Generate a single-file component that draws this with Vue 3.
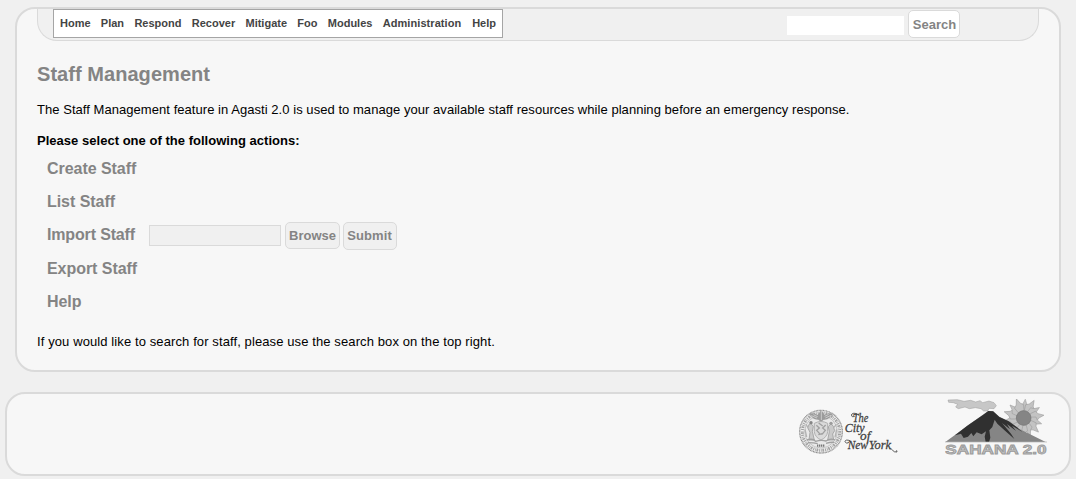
<script setup>
const menu = ['Home', 'Plan', 'Respond', 'Recover', 'Mitigate', 'Foo', 'Modules', 'Administration', 'Help']
const petals = Array.from({ length: 14 }, (_, i) => i * (360 / 14) + 4)
</script>

<template>
  <div class="page">
    <main class="panel">
      <header class="bar">
        <nav class="menu">
          <a v-for="item in menu" :key="item">{{ item }}</a>
        </nav>
        <form class="search" @submit.prevent>
          <input class="query" type="text" aria-label="Search" />
          <button class="btn find">Search</button>
        </form>
      </header>
      <section class="content">
        <h1>Staff Management</h1>
        <p class="intro">The Staff Management feature in Agasti 2.0 is used to manage your available staff resources while planning before an emergency response.</p>
        <p class="prompt">Please select one of the following actions:</p>
        <ul class="actions">
          <li><a>Create Staff</a></li>
          <li><a>List Staff</a></li>
          <li class="import">
            <a>Import Staff</a>
            <input class="file" type="text" aria-label="Import file" />
            <button class="btn browse">Browse</button>
            <button class="btn submit">Submit</button>
          </li>
          <li><a>Export Staff</a></li>
          <li><a>Help</a></li>
        </ul>
        <p class="hint">If you would like to search for staff, please use the search box on the top right.</p>
      </section>
    </main>

    <footer class="footer">
      <svg class="nyc" viewBox="54 69 300 144" aria-label="The City of New York">
        <circle cx="123" cy="140" r="64" fill="#eee" stroke="#8c8c8c" stroke-width="4" stroke-dasharray="3 1.5" />
        <circle cx="123" cy="140" r="56" fill="none" stroke="#a2a2a2" stroke-width="9" stroke-dasharray="3 3 5 2 2 3" />
        <circle cx="123" cy="140" r="49" fill="#e9e9e9" stroke="#b0b0b0" stroke-width="2" />
        <path d="M87 87q13-6 25 3l5-5 6-9 7 8 4 6q12-9 25-3-7 3-10 11-8 7-18 6l-8 7-8-7q-14 0-19-8-2-6-9-9z" fill="#9b9b9b" />
        <path d="M94 92l17 7m-11-10l13 6m40-4l-17 8m10-11l-12 6M124 78v27" fill="none" stroke="#e2e2e2" stroke-width="2" />
        <path d="M103 115q20-11 40 0v25q-2 17-20 25-18-8-20-25z" fill="#dadada" stroke="#b0b0b0" stroke-width="3" />
        <path d="M109 121l9 8-8 7 9 10m18-26l-9 9 8 7-10 12m-10-34l12 9m-13 26l15-4" stroke="#a0a0a0" stroke-width="4" fill="none" />
        <g fill="#cacaca" stroke="#9d9d9d" stroke-width="2.5">
          <path d="M93 116l7 8-3 15 6 26H87l3-23-7-14 5-11z" />
          <path d="M153 116l7 8 4 13-6 10 3 18h-18l5-25-3-15z" />
        </g>
        <circle cx="93" cy="113" r="5" fill="#858585" />
        <circle cx="153" cy="115" r="5" fill="#9c9c9c" />
        <path d="M80 165q19-6 27 4 16-5 31-1 13-9 28-3m-82 8q19 0 29 3m25-1q14-4 24-3" fill="none" stroke="#a0a0a0" stroke-width="4" />
        <path d="M75 133l5 23m90-23l-5 24M78 118l6 10m85-10l-7 9" stroke="#b3b3b3" stroke-width="4" />
        <path d="M111 182h24" stroke="#777" stroke-width="7" stroke-dasharray="4 2" />
        <g class="script">
          <text x="218" y="112" textLength="47" lengthAdjust="spacingAndGlyphs">The</text>
          <text x="194" y="141" textLength="60" lengthAdjust="spacingAndGlyphs">City</text>
          <text x="240" y="165" textLength="31" lengthAdjust="spacingAndGlyphs">of</text>
          <text x="203" y="193" textLength="61" lengthAdjust="spacingAndGlyphs">New</text>
          <text x="266" y="193" textLength="67" lengthAdjust="spacingAndGlyphs">York</text>
        </g>
        <g fill="none" stroke="#505050" stroke-width="2.8" stroke-linecap="round">
          <path d="M230 86q-13-4-16 4 1 8 9 5M210 167q-14-5-15 3 3 8 11 3" />
          <path d="M329 191q6 0 9 5 4 6 13 5l-1-4" />
        </g>
      </svg>

      <svg class="sahana" viewBox="45 42 309 171" aria-label="Sahana 2.0">
        <g transform="translate(281 99)">
          <g fill="#c3c3c3" stroke="#999" stroke-width="1.6" stroke-linejoin="round">
            <path v-for="(angle, i) in petals" :key="angle" d="M-9-20L-14-36-6-43 1-59 7-43 14-36 9-20z" :transform="`rotate(${angle}) scale(${i % 2 ? 1.04 : 0.96})`" />
          </g>
          <circle r="22" fill="#858585" stroke="#747474" stroke-width="2" />
        </g>
        <path d="M54 45l28-1 20 5 20-3 15 5 13-4 8 6 19-5 15 5 7 9-7 9-15-1-4 8h-12l-8-7-17-3-18 3-13-5-20 5-8-5 6-8-13-5-14-1z" fill="#c7c7c7" stroke="#9b9b9b" stroke-width="1.5" />
        <path d="M46 171l37-27 35-26 43-30 14-10 15 1 18 16 28 14 31 22 80 40z" fill="#858585" />
        <path d="M75 151l36-28 49-34 15-11 14 1 19 17 28 13 24 17 17 15-31-19 12 16-27-21 9 16-24-19 27 32 10 16-27-24-24-22-8-12-7 22-9 10 3 22-4 13h-10l-3-16 4-16-13 9-15-6-10 12-6-10-10 11-13 4-8-13z" fill="#303030" />
        <path d="M45 171h306" stroke="#b5b5b5" stroke-width="2" />
        <text class="wordmark" x="46" y="208" textLength="304" lengthAdjust="spacingAndGlyphs">SAHANA 2.0</text>
      </svg>
    </footer>
  </div>
</template>

<style>
body { margin: 0; background: #f0f0f0; overflow: hidden; }
</style>

<style scoped>
.page {
  box-sizing: border-box;
  height: 479px;
  padding: 7px 5px 0;
  background: #f0f0f0;
  color: #000;
  font: 13px/16px "Liberation Sans", Arial, sans-serif;
}
.panel, .footer {
  box-sizing: border-box;
  border: 2px solid #dadada;
  border-radius: 20px;
  background: #f7f7f7;
}
.panel { height: 365px; margin: 0 10px 20px; padding: 0 20px; }
.bar {
  box-sizing: border-box;
  display: flex;
  justify-content: space-between;
  height: 32px;
  padding: 0 78px 0 15px;
  border: 1px solid #dadada;
  border-top: 0;
  border-radius: 0 0 20px 20px;
  background: #f0f0f0;
}
.menu {
  box-sizing: border-box;
  display: flex;
  gap: 10.3px;
  width: 450px;
  height: 29px;
  padding: 0 6px;
  border: 1px solid #a5a5a5;
  background: #fff;
  color: #444;
  font-size: 11px;
  font-weight: bold;
  line-height: 27px;
}
.menu a:nth-child(8) { letter-spacing: 0.07px; }
.menu a:last-child { margin-left: auto; }
.search { display: flex; gap: 4px; padding-top: 1px; }
input { box-sizing: border-box; margin: 0; padding: 0; border-radius: 0; }
.query { width: 117px; height: 19px; margin-top: 6px; border: 0; background: #fff; }
.btn {
  box-sizing: border-box;
  padding: 0;
  border: 1px solid #dadada;
  border-radius: 5px;
  background: #f0f0f0;
  color: #848484;
  font: bold 13px/16px "Liberation Sans", Arial, sans-serif;
  text-align: center;
}
.find { width: 52px; height: 28px; padding: 1px 0 0 1px; background: #fff; }
p { margin: 0; }
h1 { margin: 21px 0 0; color: #848484; font-size: 20px; line-height: 24px; letter-spacing: 0.05px; }
.intro { margin-top: 16px; letter-spacing: 0.048px; }
.prompt { margin-top: 15px; font-weight: bold; letter-spacing: 0.025px; }
.actions {
  margin: 3px 0 0;
  padding: 0 0 0 10px;
  list-style: none;
  color: #848484;
  font-size: 16px;
  font-weight: bold;
  letter-spacing: -0.05px;
}
.actions li { display: flex; align-items: center; height: 33px; }
.actions .import { height: 34px; align-items: flex-start; }
.import a { width: 102px; line-height: 33px; letter-spacing: -0.15px; }
.file { width: 132px; height: 21px; margin: 7px 4px 0 0; border: 1px solid #dadada; background: #f0f0f0; }
.browse { width: 55px; height: 27px; margin: 4px 3px 0 0; }
.submit { width: 54px; height: 28px; margin-top: 4px; padding-right: 1px; letter-spacing: 0.1px; }
.hint { margin-top: 16px; letter-spacing: 0.105px; }
.footer {
  display: flex;
  align-items: flex-start;
  justify-content: flex-end;
  gap: 47px;
  height: 84px;
  padding: 5px 21px 0 0;
}
.nyc { width: 100px; height: 48px; margin-top: 9px; }
.sahana { width: 103px; height: 57px; }
.script { fill: #404040; stroke: #404040; stroke-width: 0.8px; font: italic 40px "Liberation Serif", "Times New Roman", serif; }
.wordmark { fill: #c0c0c0; stroke: #9b9b9b; stroke-width: 2.4px; font: bold 38px "Liberation Sans", Arial, sans-serif; }
</style>
